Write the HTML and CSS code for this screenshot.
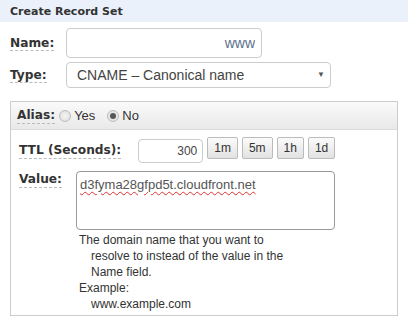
FILE: index.html
```html
<!DOCTYPE html>
<html lang="en">
<head>
  <meta charset="UTF-8" />
  <title>Create Record Set</title>
  <link rel="stylesheet" href="styles.css">
</head>
<body>
  <div class="title-bar">Create Record Set</div>

  <div class="form">
    <div class="row row-name">
      <div class="label-col"><span class="label">Name:</span></div>
      <input class="text-input name-input" type="text" value="www">
    </div>
    <div class="row row-type">
      <div class="label-col"><span class="label">Type:</span></div>
      <div class="select-wrap">
        <select class="select">
          <option>CNAME – Canonical name</option>
        </select>
        <span class="arrow">▼</span>
      </div>
    </div>

    <div class="panel">
      <div class="panel-head">
        <span class="label">Alias:</span>
        <label class="radio"><input type="radio" name="alias"> Yes</label>
        <label class="radio"><input type="radio" name="alias" checked> No</label>
      </div>
      <div class="panel-body">
        <div class="row row-ttl">
          <span class="label ttl-label">TTL (Seconds):</span>
          <input class="text-input ttl-input" type="text" value="300">
          <div class="ttl-buttons">
            <button class="ttl-btn">1m</button>
            <button class="ttl-btn">5m</button>
            <button class="ttl-btn">1h</button>
            <button class="ttl-btn">1d</button>
          </div>
        </div>
        <div class="row row-value">
          <span class="label value-label">Value:</span>
          <div class="value-col">
            <div class="textarea"><span class="misspelled">d3fyma28gfpd5t.cloudfront.net</span></div>
            <div class="help">
              <p>The domain name that you want to</p>
              <p class="indent">resolve to instead of the value in the</p>
              <p class="indent">Name field.</p>
              <p>Example:</p>
              <p class="indent">www.example.com</p>
            </div>
          </div>
        </div>
      </div>
    </div>
  </div>
</body>
</html>
```

FILE: styles.css
```css
* { box-sizing: border-box; margin: 0; padding: 0; }
body {
  font-family: "Liberation Sans", Arial, sans-serif;
  font-size: 12px;
  color: #333;
  background: #fff;
  width: 408px;
  height: 322px;
  overflow: hidden;
}
.title-bar {
  height: 22px;
  background: #eaf1fb;
  font-family: "DejaVu Sans", Verdana, sans-serif;
  font-weight: bold;
  font-size: 11px;
  color: #333;
  padding: 5px 0 0 10px;
}
.form {
  padding: 6px 10px 0 10px;
}
.row {
  display: flex;
  align-items: center;
}
.label {
  font-family: "DejaVu Sans", Verdana, sans-serif;
  font-weight: bold;
  font-size: 12.2px;
  color: #333;
  border-bottom: 1px dashed #bbb;
  line-height: 15px;
}
.label-col {
  width: 56px;
  flex: 0 0 auto;
}
.row-name { height: 30px; }
.row-type { height: 26px; margin-top: 4px; }

.text-input {
  border: 1px solid #ccc;
  border-radius: 4px;
  font-family: "Liberation Sans", Arial, sans-serif;
  color: #555;
  text-align: right;
  background: #fff;
  outline: none;
}
.name-input {
  width: 196px;
  height: 30px;
  font-size: 14px;
  padding: 0 6px;
  color: #5a6f8c;
}
.select-wrap {
  position: relative;
  width: 265px;
  height: 26px;
}
.select {
  width: 100%;
  height: 26px;
  border: 1px solid #ccc;
  border-radius: 4px;
  background: #fff;
  appearance: none;
  -webkit-appearance: none;
  font-family: "Liberation Sans", Arial, sans-serif;
  font-size: 14px;
  color: #444;
  padding: 0 10px;
}
.arrow {
  position: absolute;
  right: 6px;
  top: 8px;
  font-size: 8px;
  color: #555;
  pointer-events: none;
}

.panel {
  margin-top: 13px;
  border: 1px solid #ccc;
  width: 388px;
  height: 215px;
}
.panel-head {
  height: 28px;
  background: linear-gradient(#fafafa, #e9e9e9);
  border-bottom: 1px solid #ddd;
  display: flex;
  align-items: center;
  padding-left: 6px;
}
.radio {
  display: flex;
  align-items: center;
  font-size: 13px;
  color: #333;
  margin-left: 4px;
  gap: 3px;
}
.radio + .radio { margin-left: 12px; }
.radio input {
  appearance: none;
  -webkit-appearance: none;
  width: 12px;
  height: 12px;
  border: 1px solid #bbb;
  border-radius: 50%;
  background: radial-gradient(#f4f4f4, #dcdcdc);
  position: relative;
}
.radio input:checked::after {
  content: "";
  position: absolute;
  left: 2px;
  top: 2px;
  width: 6px;
  height: 6px;
  border-radius: 50%;
  background: #555;
}
.panel-body {
  padding: 9px 0 0 8px;
}
.row-ttl { height: 24px; }
.ttl-label { margin-right: 17px; }
.ttl-input {
  width: 65px;
  height: 24px;
  font-size: 12px;
  padding: 0 5px;
  color: #444;
}
.ttl-buttons {
  display: flex;
  gap: 4px;
  margin-left: 4px;
  align-self: flex-start;
  margin-top: -2px;
}
.ttl-btn {
  height: 22px;
  padding: 0 6px;
  border: 1px solid #bbb;
  border-radius: 2px;
  background: linear-gradient(#fbfbfb, #e2e2e2);
  font-family: "Liberation Sans", Arial, sans-serif;
  font-size: 12px;
  color: #333;
}
.row-value {
  align-items: flex-start;
  margin-top: 8px;
}
.value-label { margin-top: 1px; margin-right: 14px; }
.value-col { display: flex; flex-direction: column; }
.textarea {
  width: 259px;
  height: 59px;
  border: 1px solid #999;
  border-radius: 4px;
  padding: 5px 3px;
  font-size: 13px;
  color: #555;
}
.misspelled {
  text-decoration: underline wavy #e03030;
  text-decoration-thickness: 1px;
  text-underline-offset: 2px;
}
.help {
  padding: 2px 0 0 3px;
  font-size: 12px;
  color: #333;
  line-height: 16px;
}
.help .indent { padding-left: 12px; }
```
